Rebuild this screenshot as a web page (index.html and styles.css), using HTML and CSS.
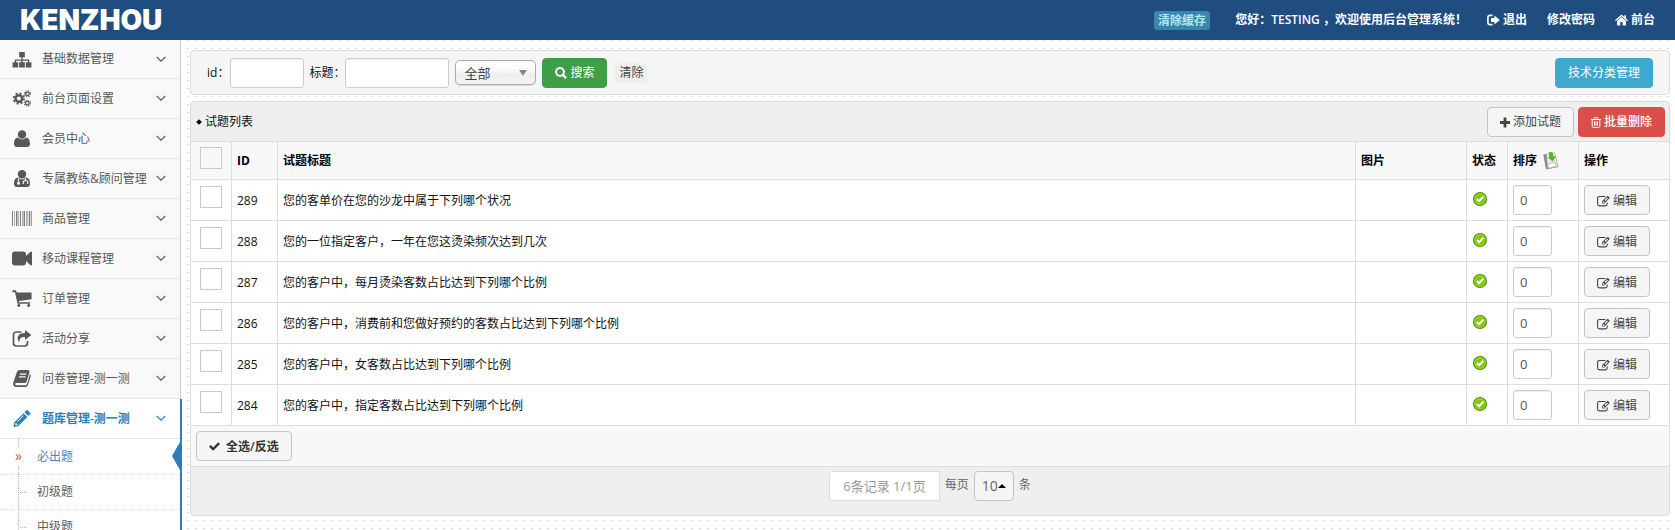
FILE: index.html
```html
<!DOCTYPE html>
<html lang="zh-CN">
<head>
<meta charset="utf-8">
<title>后台管理系统</title>
<link rel="stylesheet" href="styles.css">
</head>
<body>
<svg class="defs" aria-hidden="true">
  <symbol id="down" viewBox="0 0 10 7"><path d="M.7.9 5 5.2 9.3.9" fill="none" stroke="currentColor" stroke-width="1.3"/></symbol>
  <symbol id="sitemap" viewBox="0 0 20 18"><path d="M7 1h6v5.500h-2.300v2.500h7v3H20V17.500h-6V12h2.300v-1.600h-5.600V12H13v5.500H7V12h2.300v-1.600H3.700V12H6v5.500H0V12h2.300V9h7V6.500H7z"/></symbol>
  <symbol id="cogs" viewBox="0 0 20 19"><g fill="none" stroke="currentColor"><circle cx="6.500" cy="9.500" r="3.700" stroke-width="2.800"/><circle cx="6.500" cy="9.500" r="5.800" stroke-width="2" stroke-dasharray="2.280 2.280"/><circle cx="16" cy="4.300" r="2" stroke-width="1.500"/><circle cx="16" cy="4.300" r="3.300" stroke-width="1.300" stroke-dasharray="1.300 1.300"/><circle cx="16" cy="14.700" r="2" stroke-width="1.500"/><circle cx="16" cy="14.700" r="3.300" stroke-width="1.300" stroke-dasharray="1.300 1.300"/></g></symbol>
  <symbol id="user" viewBox="0 0 16 17"><circle cx="8" cy="4.500" r="4.200"/><path d="M4 7.500c2 2.600 6 2.600 8 0 3 .3 4 3.200 4 6.500 0 1.800-1.200 3-3 3H3c-1.800 0-3-1.200-3-3 0-3.300 1-6.200 4-6.500z"/></symbol>
  <symbol id="doctor" viewBox="0 0 16 17"><circle cx="8" cy="4.300" r="4.200"/><path d="M4 7.500c2 2.400 6 2.400 8 0 3 .3 4 3.200 4 6.500 0 1.800-1.200 3-3 3H3c-1.800 0-3-1.200-3-3 0-3.300 1-6.200 4-6.500z"/><path d="M4.500 8.500v4M11.500 8.500v2M9.300 14v-1.500a2.200 2.200 0 0 1 4.400 0V14" fill="none" stroke="#f9f9f9" stroke-width="1.200"/><circle cx="4.500" cy="13.300" r="1.500" fill="#f9f9f9"/></symbol>
  <symbol id="barcode" viewBox="0 0 20 15"><path d="M0 0h1v15H0zM2 0h.6v15H2zM4 0h1.500v15H4zM6.500 0h.6v15h-.6zM8 0h1v15H8zM10 0h.6v15H10zM11.500 0h1.500v15h-1.500zM14 0h.6v15H14zM15.500 0h.7v15h-.7zM17 0h1.300v15H17zM19.300 0h.7v15h-.7z"/></symbol>
  <symbol id="video" viewBox="0 0 20 14"><path d="M3 0h8q3 0 3 3v1.500L18.500.2Q20-.5 20 1v12q0 1.500-1.500.8L14 9.500V11q0 3-3 3H3q-3 0-3-3V3q0-3 3-3z"/></symbol>
  <symbol id="cart" viewBox="0 0 18 16"><path d="M0 .3h3.300l.7 2h14v6.500L6 10.300l.2 1.300h10.500V13H4.800L2.400 2H0z"/><circle cx="6" cy="14.600" r="1.400"/><circle cx="15.300" cy="14.600" r="1.400"/></symbol>
  <symbol id="share" viewBox="0 0 19 17"><path d="M9 2H4Q1 2 1 5v8q0 3 3 3h8q3 0 3-3v-2" fill="none" stroke="currentColor" stroke-width="1.700"/><path d="M12.500 0 18.800 5l-6.300 5V7C8.500 7 6.500 8.300 7 12.500 3.500 9 4.500 3 12.500 3z"/></symbol>
  <symbol id="book" viewBox="0 0 18 17"><path fill-rule="evenodd" d="M6.500 0H15q2 .2 1.500 2.200l-3 9.500Q13 13 11.500 13H3q-1.200.3-.7 1.500.4.800 1.500.8h8.800q1 0 1.400-1.300L17 4q1.200.8.7 2.300l-2.800 9Q14.300 17 12.500 17h-9Q0 17 0 13.500L4 1.700Q4.700 0 6.500 0zM7 3.500 6.700 4.700h6.600l.3-1.200zM6.200 6.200 5.900 7.400h6.600l.3-1.200z"/></symbol>
  <symbol id="pencil" viewBox="0 0 17 17"><path fill-rule="evenodd" d="M12.700.5q.8-.8 1.600 0l2.200 2.200q.8.800 0 1.600l-1.800 1.800-3.800-3.800zM10 3.200 13.800 7 4.500 16.300 0 17l.7-4.500zM2 13l-.4 1.500 1 1L4 15.200v-1.300H3V13zM9.700 5.300 3.600 11.400l.5.500 6.100-6.100z"/></symbol>
  <symbol id="logout" viewBox="0 0 13 11"><path d="M5.500.9H3Q.9.900.9 3v5Q.9 10.100 3 10.100h2.500" fill="none" stroke="currentColor" stroke-width="1.600"/><path d="M7.500 1 12.800 5.500 7.500 10V7.400H4V3.600h3.500z"/></symbol>
  <symbol id="home" viewBox="0 0 13 11"><path d="M6.500 0 9.300 2.500V.8H11V4l2 1.800-.8.900L6.500 1.700.8 6.700 0 5.800zM6.500 2.600 11 6.500V11H7.700V7.500H5.300V11H2V6.500z"/></symbol>
  <symbol id="search" viewBox="0 0 12 12"><circle cx="5" cy="5" r="3.900" fill="none" stroke="currentColor" stroke-width="2"/><path d="m7.500 7.500 3.600 3.600" stroke="currentColor" stroke-width="2.400"/></symbol>
  <symbol id="plus" viewBox="0 0 10 10"><path d="M3.600 0h2.800v3.600H10v2.800H6.400V10H3.600V6.400H0V3.600h3.600z"/></symbol>
  <symbol id="trash" viewBox="0 0 10 11"><path d="M0 2.500h10M3.200 2.300V.7h3.600v1.600M1.200 2.500v6.800q0 1.100 1 1.100h5.600q1 0 1-1.100V2.500M3.500 4.300v4.300M5 4.300v4.300M6.500 4.300v4.300" fill="none" stroke="currentColor"/></symbol>
  <symbol id="edit" viewBox="0 0 13 11"><path d="M8.500 1H2.500Q.6 1 .6 2.800v5.700q0 1.900 1.900 1.900h5.800q1.900 0 1.900-1.900V7" fill="none" stroke="currentColor" stroke-width="1.100"/><path fill-rule="evenodd" d="m10.700.2 2.100 2.100L7.500 7.900H5.200V5.600zM6 6v1.200h1.300l.5-.5-1.300-1.200zm1.600-1.500.9.900 2.400-2.500-.8-.8z"/></symbol>
  <symbol id="check" viewBox="0 0 11 9"><path d="M0 4.700 1.700 3l2.500 2.500L9.300.3 11 2 4.200 8.800z"/></symbol>
  <symbol id="ok" viewBox="0 0 14 14"><circle cx="7" cy="7" r="7" fill="#468a08"/><circle cx="7" cy="7" r="5.900" fill="#a9dd2c"/><circle cx="7" cy="7.200" r="5" fill="#83c60b"/><path d="m3.800 7 2.300 2.300 4.200-4.500" fill="none" stroke="#fff" stroke-width="2"/></symbol>
  <symbol id="save" viewBox="0 0 16 18"><path d="m.3 2.500 11.500-1.700L15.500 15 3 17.500z" fill="#888"/><path d="m3.500 2.200 8-1.200L14.800 14.500l-10 2z" fill="#e4e4e4"/><path d="m5 12 7-1.400.8 3.700-7 1.500z" fill="#fff" stroke="#aaa" stroke-width=".6"/><path d="M5.500.3 9.500 0l.8 4.500 2.700-.3-3.300 5-5-3.700 1.800-.3z" fill="#5cae2b"/></symbol>
</svg>

<header class="topbar">
  <a class="logo" href="#">KENZHOU</a>
  <nav class="topnav">
    <a class="cache" href="#">清除缓存</a>
    <span class="greeting">您好<span class="mid">：</span>TESTING <span class="mid">，</span>欢迎使用后台管理系统<span class="mid">！</span></span>
    <a href="#"><svg class="i13"><use href="#logout"/></svg>退出</a>
    <a href="#">修改密码</a>
    <a href="#"><svg class="i13"><use href="#home"/></svg>前台</a>
  </nav>
</header>

<div class="layout">
  <aside class="sidebar">
    <nav>
      <ul class="menu">
        <li><a href="#"><svg class="mi"><use href="#sitemap"/></svg>基础数据管理<svg class="arrow"><use href="#down"/></svg></a></li>
        <li><a href="#"><svg class="mi"><use href="#cogs"/></svg>前台页面设置<svg class="arrow"><use href="#down"/></svg></a></li>
        <li><a href="#"><svg class="mi"><use href="#user"/></svg>会员中心<svg class="arrow"><use href="#down"/></svg></a></li>
        <li><a href="#"><svg class="mi"><use href="#doctor"/></svg>专属教练&amp;顾问管理<svg class="arrow"><use href="#down"/></svg></a></li>
        <li><a href="#"><svg class="mi barcode"><use href="#barcode"/></svg>商品管理<svg class="arrow"><use href="#down"/></svg></a></li>
        <li><a href="#"><svg class="mi"><use href="#video"/></svg>移动课程管理<svg class="arrow"><use href="#down"/></svg></a></li>
        <li><a href="#"><svg class="mi"><use href="#cart"/></svg>订单管理<svg class="arrow"><use href="#down"/></svg></a></li>
        <li><a href="#"><svg class="mi"><use href="#share"/></svg>活动分享<svg class="arrow"><use href="#down"/></svg></a></li>
        <li><a href="#"><svg class="mi"><use href="#book"/></svg>问卷管理-测一测<svg class="arrow"><use href="#down"/></svg></a></li>
        <li class="open"><a href="#"><svg class="mi"><use href="#pencil"/></svg>题库管理-测一测<svg class="arrow"><use href="#down"/></svg></a>
          <ul class="submenu">
            <li class="current"><a href="#">必出题</a></li>
            <li><a href="#">初级题</a></li>
            <li><a href="#">中级题</a></li>
          </ul>
        </li>
      </ul>
    </nav>
  </aside>

  <main class="content">
    <form class="filter">
      <label for="fid">id<span class="mid">：</span></label><input class="field fid" id="fid" type="text">
      <label for="ftitle">标题<span class="mid">：</span></label><input class="field ftitle" id="ftitle" type="text">
      <span class="picker"><select aria-label="状态"><option>全部</option></select></span>
      <button class="btn green" type="button"><svg class="i12"><use href="#search"/></svg>搜索</button>
      <a class="clear" href="#">清除</a>
      <a class="btn cyan" href="#">技术分类管理</a>
    </form>

    <section class="panel">
      <div class="panel-head">
        <h1>试题列表</h1>
        <button class="btn" type="button"><svg class="i10"><use href="#plus"/></svg>添加试题</button>
        <button class="btn red" type="button"><svg class="i10"><use href="#trash"/></svg>批量删除</button>
      </div>
      <table>
        <colgroup><col class="c-check"><col class="c-id"><col><col class="c-pic"><col class="c-state"><col class="c-sort"><col class="c-op"></colgroup>
        <thead><tr><th><input type="checkbox" aria-label="全选"></th><th>ID</th><th>试题标题</th><th>图片</th><th>状态</th><th><span class="sort">排序<svg><use href="#save"/></svg></span></th><th>操作</th></tr></thead>
        <tbody>
          <tr><td><input type="checkbox" aria-label="289"></td><td class="txt">289</td><td class="txt">您的客单价在您的沙龙中属于下列哪个状况</td><td></td><td><svg class="ok"><use href="#ok"/></svg></td><td><input class="field order" type="text" value="0" aria-label="排序"></td><td><button class="btn" type="button"><svg class="i13"><use href="#edit"/></svg>编辑</button></td></tr>
          <tr><td><input type="checkbox" aria-label="288"></td><td class="txt">288</td><td class="txt">您的一位指定客户<span class="mid">，</span>一年在您这烫染频次达到几次</td><td></td><td><svg class="ok"><use href="#ok"/></svg></td><td><input class="field order" type="text" value="0" aria-label="排序"></td><td><button class="btn" type="button"><svg class="i13"><use href="#edit"/></svg>编辑</button></td></tr>
          <tr><td><input type="checkbox" aria-label="287"></td><td class="txt">287</td><td class="txt">您的客户中<span class="mid">，</span>每月烫染客数占比达到下列哪个比例</td><td></td><td><svg class="ok"><use href="#ok"/></svg></td><td><input class="field order" type="text" value="0" aria-label="排序"></td><td><button class="btn" type="button"><svg class="i13"><use href="#edit"/></svg>编辑</button></td></tr>
          <tr><td><input type="checkbox" aria-label="286"></td><td class="txt">286</td><td class="txt">您的客户中<span class="mid">，</span>消费前和您做好预约的客数占比达到下列哪个比例</td><td></td><td><svg class="ok"><use href="#ok"/></svg></td><td><input class="field order" type="text" value="0" aria-label="排序"></td><td><button class="btn" type="button"><svg class="i13"><use href="#edit"/></svg>编辑</button></td></tr>
          <tr><td><input type="checkbox" aria-label="285"></td><td class="txt">285</td><td class="txt">您的客户中<span class="mid">，</span>女客数占比达到下列哪个比例</td><td></td><td><svg class="ok"><use href="#ok"/></svg></td><td><input class="field order" type="text" value="0" aria-label="排序"></td><td><button class="btn" type="button"><svg class="i13"><use href="#edit"/></svg>编辑</button></td></tr>
          <tr><td><input type="checkbox" aria-label="284"></td><td class="txt">284</td><td class="txt">您的客户中<span class="mid">，</span>指定客数占比达到下列哪个比例</td><td></td><td><svg class="ok"><use href="#ok"/></svg></td><td><input class="field order" type="text" value="0" aria-label="排序"></td><td><button class="btn" type="button"><svg class="i13"><use href="#edit"/></svg>编辑</button></td></tr>
        </tbody>
      </table>
      <div class="bulk"><button class="btn strong" type="button"><svg class="i11"><use href="#check"/></svg>全选/反选</button></div>
      <div class="pager">
        <span class="total">6条记录 1/1页</span>
        <span>每页</span>
        <button class="btn size" type="button">10<i class="caret"></i></button>
        <span>条</span>
      </div>
    </section>
  </main>
</div>
</body>
</html>
```
FILE: styles.css
```css
* { box-sizing: border-box; }
html, body { height: 100%; }
body {
  margin: 0;
  display: flex;
  flex-direction: column;
  overflow: hidden;
  font: 12px/20px "Open Sans", "Noto Sans CJK SC", sans-serif;
  color: #111;
}
a { color: inherit; text-decoration: none; }
ul { list-style: none; margin: 0; padding: 0; }
svg { fill: currentColor; flex: none; }
.defs { position: absolute; width: 0; height: 0; }
.i10 { width: 10px; height: 11px; }
.i11 { width: 11px; height: 11px; }
.i12 { width: 12px; height: 12px; }
.i13 { width: 13px; height: 12px; }
/* Full-width punctuation centred in its em box */
.mid { font-family: "Noto Sans CJK TC", sans-serif; line-height: 1; }

/* Top bar */
.topbar {
  flex: none;
  display: flex;
  justify-content: space-between;
  align-items: center;
  height: 40px;
  padding: 0 20px;
  background: #204d80;
  color: #fff;
}
.logo { font: 900 28px/40px Inter, sans-serif; }
.topnav { display: flex; align-items: center; gap: 20px; font-weight: 600; }
.topnav a { display: flex; align-items: center; gap: 3px; }
.topnav .cache {
  padding: 0 4px;
  margin-right: 5px;
  border-radius: 3px;
  background: #3a87ad;
  color: #b5e4f5;
  line-height: 19px;
}
.greeting { white-space: pre; }

/* Sidebar */
.layout { flex: 1; display: flex; min-height: 0; }
.sidebar { flex: none; width: 181px; background: #f9f9f9; border-right: 1px solid #ccc; color: #585858; }
.sidebar nav { height: 100%; }
.menu { display: flex; flex-direction: column; height: 100%; }
.menu > li { flex: none; }
.menu > li > a {
  display: flex;
  align-items: center;
  height: 40px;
  padding: 0 14px 0 12px;
  border-bottom: 1px solid #e5e5e5;
  white-space: nowrap;
}
.menu > li:first-child > a { height: 39px; }
.mi { width: 20px; height: 17px; margin-right: 10px; }
.mi.barcode { opacity: .75; }
.arrow { width: 10px; height: 7px; margin-left: auto; }
.menu > .open { position: relative; flex: 1 0 0; margin-right: -2px; background: #fff; border-right: 2px solid #2b7dbc; }
.menu > .open > a { color: #2b7dbc; font-weight: 600; }
.submenu { position: relative; }
.submenu::before { content: ""; position: absolute; left: 18px; top: 0; bottom: 0; border-left: 1px dotted #9dbdd6; }
.submenu li { position: relative; border-bottom: 1px dotted #ddd; }
.submenu a { display: block; padding: 7px 0 7px 37px; color: #616161; }
.submenu li::before { content: ""; position: absolute; left: 20px; top: 17px; width: 7px; border-top: 1px dotted #9dbdd6; }
.submenu .current a { padding-top: 8px; color: #4b88b7; }
.submenu .current::before {
  content: "»";
  left: 14px;
  top: 8px;
  width: 9px;
  border: 0;
  background: #fff;
  color: #c86139;
  font-size: 14px;
  line-height: 18px;
  text-align: center;
}
.current::after {
  content: "";
  position: absolute;
  right: 0;
  top: 3px;
  border: solid transparent;
  border-width: 14px 8px 14px 0;
  border-right-color: #2b7dbc;
}

/* Content */
.content {
  flex: 1;
  min-width: 0;
  padding: 10px 5px 0 9px;
  background: #fff radial-gradient(circle at 7px 0, #d5d5d5 1px, transparent 1px) 0 0 / 8px 8px;
}
.btn {
  display: inline-flex;
  align-items: center;
  justify-content: center;
  gap: 3px;
  height: 30px;
  padding: 1px 12px 0;
  border: 1px solid #c4c4c4;
  border-radius: 4px;
  background: #f5f5f5;
  color: #444;
  font: inherit;
  white-space: nowrap;
}
.btn.green { background: #3f9f46; border-color: #3f9f46; color: #fff; }
.btn.cyan { background: #3ea9cd; border-color: #3ea9cd; color: #fff; margin-left: auto; }
.btn.red { background: #da4f49; border-color: #da4f49; color: #fff; font-weight: 500; }
.btn.strong { color: #333; font-weight: 600; gap: 6px; }
.field {
  height: 30px;
  padding: 4px 6px;
  border: 1px solid #ccc;
  border-radius: 3px;
  background: #fff;
  box-shadow: inset 0 1px 1px #eee;
  color: #555;
  font: inherit;
  font-size: 13px;
}
.filter {
  display: flex;
  align-items: center;
  height: 45px;
  margin-bottom: 6px;
  padding: 0 16px;
  border: 1px solid #ddd;
  border-radius: 4px;
  background: #f5f5f5;
}
.fid { width: 74px; margin: 0 5px 0 1px; }
.ftitle { width: 104px; margin-right: 6px; }
.picker { position: relative; margin-right: 6px; }
.picker select {
  appearance: none;
  display: block;
  width: 81px;
  height: 25px;
  padding: 0 8px;
  border: 1px solid #aaa;
  border-radius: 5px;
  background: linear-gradient(#fff 20%, #f6f6f6 50%, #eee 52%, #f4f4f4);
  box-shadow: 0 1px 1px #ddd;
  color: #444;
  font: inherit;
  font-size: 13px;
}
.picker::after {
  content: "";
  position: absolute;
  right: 9px;
  top: 10px;
  border: solid transparent;
  border-width: 6px 4px 0;
  border-top-color: #888;
  pointer-events: none;
}
.clear { margin-left: 8px; padding: 0 4px; border-radius: 3px; background: #eee; color: #444; }

.panel { border: 1px solid #ddd; border-radius: 4px; background: #efefef; }
.panel-head { display: flex; align-items: center; gap: 4px; height: 39px; padding: 0 4px 0 5px; }
.panel-head h1 { display: flex; align-items: center; gap: 4px; margin: 0 auto 0 0; font-size: 12px; font-weight: 400; }
.panel-head h1::before { content: ""; width: 4px; height: 4px; margin-left: 1px; background: #000; transform: rotate(45deg); }
table { width: 100%; table-layout: fixed; border-collapse: separate; border-spacing: 0; background: #fff; }
.c-check { width: 41px; }
.c-id { width: 46px; }
.c-pic { width: 111px; }
.c-state { width: 41px; }
.c-sort { width: 71px; }
.c-op { width: 90px; }
th, td { height: 41px; padding: 0 5px; border-top: 1px solid #ddd; border-right: 1px solid #ddd; text-align: left; vertical-align: middle; }
th:last-child, td:last-child { border-right: 0; }
th { height: 38px; background: #f8f8f8; color: #000; font-weight: 700; }
th:first-child, td:first-child { padding: 0 0 0 9px; }
.txt { padding-top: 2px; }
input[type="checkbox"] { appearance: none; display: block; width: 22px; height: 22px; margin: 0 0 6px; border: 1px solid #ccc8c2; }
.order { display: block; width: 39px; }
.ok { display: block; width: 14px; height: 14px; margin: 0 0 2px 1px; }
.sort { display: flex; align-items: center; gap: 6px; }
.sort svg { width: 16px; height: 18px; }
td .btn { display: flex; width: 66px; padding: 1px 0 0; }
.bulk { display: flex; align-items: center; height: 42px; padding: 0 5px; border: solid #ddd; border-width: 1px 0; background: #f8f8f8; }
.pager { display: flex; justify-content: center; align-items: flex-start; gap: 5px; padding: 4px 0 14px; color: #666; line-height: 28px; }
.total { padding: 0 13px; border: 1px solid #ddd; border-radius: 3px 0 0 3px; background: #fff; color: #999; font-size: 13px; }
.size { padding: 0 7px; gap: 0; font-size: 14px; color: #666; }
.caret { border: solid transparent; border-width: 0 4px 4px; border-bottom-color: #000; }
```
